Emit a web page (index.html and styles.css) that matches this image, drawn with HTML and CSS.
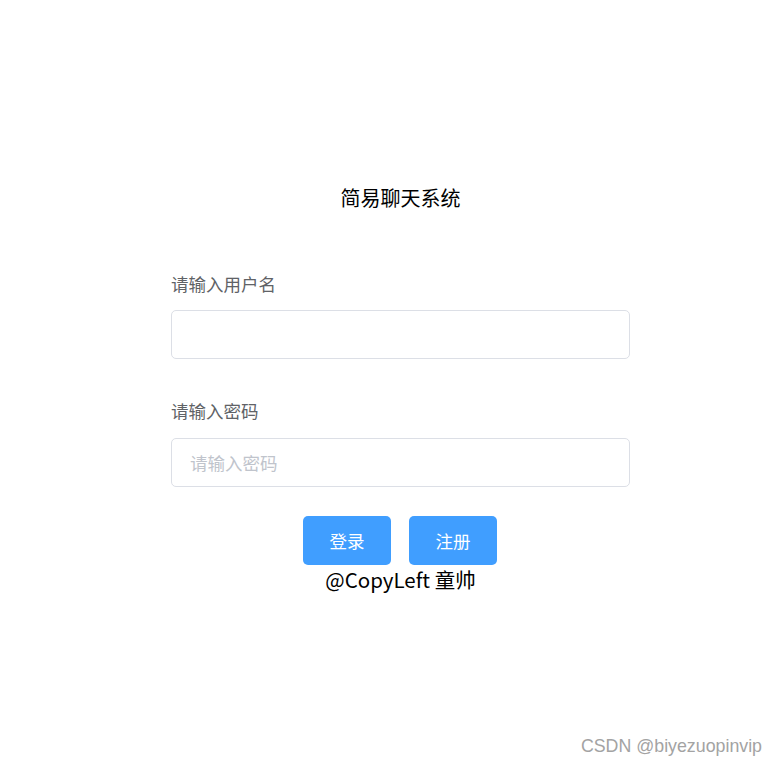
FILE: index.html
```html
<!DOCTYPE html>
<html lang="zh">
<head>
<meta charset="utf-8">
<link rel="stylesheet" href="styles.css">
</head>
<body>
<div class="page">
  <h1 class="title">简易聊天系统</h1>
  <form class="form">
    <label class="label">请输入用户名</label>
    <div class="input"></div>
    <label class="label label-2">请输入密码</label>
    <div class="input"><span class="placeholder">请输入密码</span></div>
    <div class="buttons">
      <button type="button" class="btn">登录</button>
      <button type="button" class="btn">注册</button>
    </div>
    <div class="footer">@CopyLeft 童帅</div>
  </form>
</div>
<div class="watermark">CSDN @biyezuopinvip</div>
</body>
</html>
```

FILE: styles.css
```css
html, body {
  margin: 0;
  padding: 0;
  background: #ffffff;
}
body {
  width: 776px;
  height: 764px;
  position: relative;
  overflow: hidden;
  font-family: "Noto Sans CJK SC", "Microsoft YaHei", sans-serif;
}
.page {
  padding-top: 186px;
}
.title {
  margin: 0;
  padding-left: 25px;
  text-align: center;
  font-size: 20px;
  line-height: 24px;
  font-weight: normal;
  color: #000000;
}
.form {
  width: 459px;
  margin: 62px 0 0 171px;
  display: flex;
  flex-direction: column;
}
.label {
  font-size: 17.5px;
  line-height: 24px;
  color: #606266;
  margin-bottom: 14px;
}
.label-2 {
  margin-top: 40px;
  margin-bottom: 15px;
}
.input {
  box-sizing: border-box;
  height: 49px;
  border: 1px solid #dcdfe6;
  border-radius: 5px;
  padding-left: 18px;
  display: flex;
  align-items: center;
}
.placeholder {
  font-size: 17.5px;
  color: #c0c4cc;
}
.buttons {
  margin-top: 29px;
  margin-right: 1px;
  display: flex;
  justify-content: center;
  gap: 18px;
}
.btn {
  width: 88px;
  height: 49px;
  border: none;
  border-radius: 5px;
  background: #409eff;
  color: #ffffff;
  font-family: inherit;
  font-size: 17.5px;
  padding: 0;
}
.footer {
  margin-top: 2px;
  text-align: center;
  font-size: 20.5px;
  line-height: 24px;
  color: #000000;
}
.watermark {
  position: absolute;
  right: 14px;
  bottom: 8px;
  font-family: "Liberation Sans", Arial, sans-serif;
  font-size: 17.8px;
  line-height: 20px;
  color: #a3a3a3;
}
```
